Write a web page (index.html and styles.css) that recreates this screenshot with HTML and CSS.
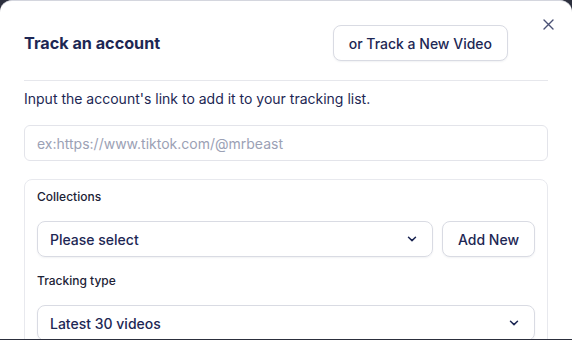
FILE: index.html
```html
<html>

<head>
  <meta name="viewport" content="width=device-width, initial-scale=1">
  <link rel="stylesheet" href="styles.css">
</head>

<body>
  <div class="modal">
    <button class="close" aria-label="close">
      <svg width="11" height="11" viewBox="0 0 11 11"><path d="M1 1L10 10M10 1L1 10" stroke="#4a5175" stroke-width="1.4" stroke-linecap="round"/></svg>
    </button>

    <div class="head">
      <h2 class="title">Track an account</h2>
      <button class="btn">or Track a New Video</button>
    </div>
    <hr class="divider">

    <p class="intro">Input the account's link to add it to your tracking list.</p>
    <input class="field" type="text" placeholder="ex:https://www.tiktok.com/@mrbeast">

    <div class="card">
      <label class="label">Collections</label>
      <div class="row">
        <div class="select grow">
          <span>Please select</span>
          <svg width="10" height="6" viewBox="0 0 10 6"><path d="M1.5 1.2L5 4.6L8.5 1.2" fill="none" stroke="#1d2754" stroke-width="1.5" stroke-linecap="round" stroke-linejoin="round"/></svg>
        </div>
        <button class="btn small">Add New</button>
      </div>

      <label class="label">Tracking type</label>
      <div class="select">
        <span>Latest 30 videos</span>
        <svg width="10" height="6" viewBox="0 0 10 6"><path d="M1.5 1.2L5 4.6L8.5 1.2" fill="none" stroke="#1d2754" stroke-width="1.5" stroke-linecap="round" stroke-linejoin="round"/></svg>
      </div>
    </div>
  </div>
</body>

</html>
```

FILE: styles.css
```css
body {
  margin: 0;
  background: #2c2f3d;
  font-family: Inter, "Noto Sans", sans-serif;
  color: #1d2754;
  height: 340px;
  overflow: hidden;
}

.modal {
  position: relative;
  background: #ffffff;
  border-radius: 12px 12px 0 0;
  border-top: 1px solid #d4d6de;
  height: 339px;
  overflow: hidden;
  padding: 24px 24px 0 24px;
  box-sizing: border-box;
}

.close {
  position: absolute;
  top: 18px;
  right: 18px;
  background: none;
  border: 0;
  padding: 0;
  line-height: 0;
}

.head {
  display: flex;
  align-items: center;
  justify-content: space-between;
  padding-right: 40px;
}

.title {
  margin: 0;
  font-size: 16.2px;
  font-weight: 700;
  color: #1d2754;
}

.btn {
  font-family: inherit;
  font-size: 14px;
  font-weight: 500;
  color: #1d2754;
  background: #ffffff;
  border: 1px solid #d9dbe3;
  border-radius: 8px;
  height: 36px;
  padding: 0 15px;
  box-shadow: 0 1px 2px rgba(20, 30, 60, 0.06);
}

.divider {
  border: 0;
  border-top: 1px solid #e6e7ec;
  margin: 19px 0 0 0;
}

.intro {
  margin: 8px 0 0 0;
  font-size: 14px;
  line-height: 20px;
  color: #1d2754;
}

.field {
  display: block;
  width: 100%;
  box-sizing: border-box;
  height: 36px;
  margin-top: 16px;
  padding: 0 12px;
  font-family: inherit;
  font-size: 14px;
  border: 1px solid #e3e4ea;
  border-radius: 6px;
  outline: none;
}

.field::placeholder {
  color: #9ba1b5;
}

.card {
  margin-top: 18px;
  border: 1px solid #e8e9ee;
  border-radius: 8px;
  padding: 9px 12px 12px 12px;
}

.label {
  display: block;
  font-size: 12px;
  line-height: 16px;
  font-weight: 500;
  color: #1c2236;
}

.row {
  display: flex;
  gap: 9px;
  margin: 16px 0 16px 0;
}

.grow {
  flex: 1;
}

.small {
  width: 93px;
  padding: 0;
}

.select {
  display: flex;
  align-items: center;
  justify-content: space-between;
  height: 36px;
  box-sizing: border-box;
  padding: 0 15px 0 12px;
  border: 1px solid #d9dbe3;
  border-radius: 8px;
  font-size: 14px;
  font-weight: 500;
  color: #1d2754;
  box-shadow: 0 1px 2px rgba(20, 30, 60, 0.06);
}

.card > .select {
  margin-top: 16px;
}
```
